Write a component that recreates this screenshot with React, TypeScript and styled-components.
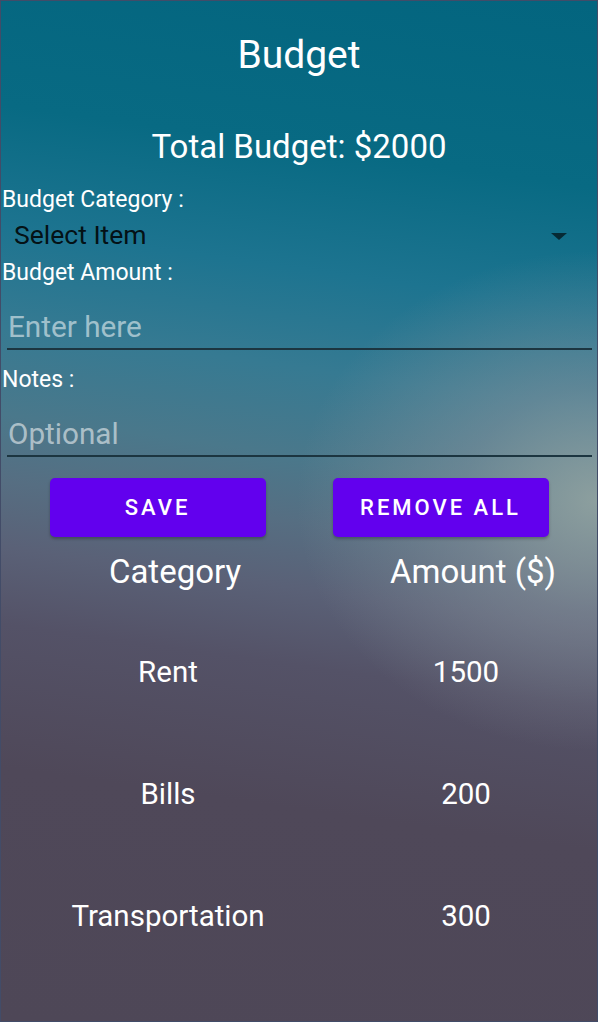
import React from "react";
import styled, { createGlobalStyle } from "styled-components";

const GlobalStyle = createGlobalStyle`
  html, body {
    margin: 0;
    padding: 0;
    background: #4e4757;
  }
  * {
    box-sizing: border-box;
  }
`;

interface Entry {
  category: string;
  amount: number;
}

const entries: Entry[] = [
  { category: "Rent", amount: 1500 },
  { category: "Bills", amount: 200 },
  { category: "Transportation", amount: 300 },
];

const App = () => {
  const total = entries.reduce((sum, e) => sum + e.amount, 0);

  return (
    <>
      <GlobalStyle />
      <Screen>
        <Title>Budget</Title>
        <Total>Total Budget: ${total}</Total>

        <Label>Budget Category :</Label>
        <Spinner>
          <SpinnerText>Select Item</SpinnerText>
          <Arrow />
        </Spinner>

        <Label>Budget Amount :</Label>
        <Field placeholder="Enter here" />

        <Label $gap={17}>Notes :</Label>
        <Field placeholder="Optional" />

        <Actions>
          <Button>Save</Button>
          <Button>Remove All</Button>
        </Actions>

        <Table>
          <HeadCell>Category</HeadCell>
          <HeadCell>Amount ($)</HeadCell>
          {entries.map((e) => (
            <React.Fragment key={e.category}>
              <Cell>{e.category}</Cell>
              <Cell>{e.amount}</Cell>
            </React.Fragment>
          ))}
        </Table>
      </Screen>
    </>
  );
};

export default App;

const Screen = styled.div`
  width: 598px;
  height: 1022px;
  overflow: hidden;
  border: 1px solid #424c68;
  font-family: Roboto, "Noto Sans", sans-serif;
  color: #ffffff;
  display: flex;
  flex-direction: column;
  background: radial-gradient(
      ellipse 300px 250px at 100% 49%,
      rgba(152, 166, 162, 0.85) 0%,
      rgba(140, 148, 156, 0.5) 45%,
      rgba(130, 135, 150, 0) 100%
    ),
    linear-gradient(
      188deg,
      #03657f 0%,
      #086a83 17%,
      #1d7490 28%,
      #367a92 37%,
      #4a788b 45%,
      #566e82 51%,
      #5a6177 57%,
      #545267 64%,
      #4f4859 77%,
      #4e4757 100%
    );
`;

const Title = styled.h1`
  margin: 31px 0 0;
  font-size: 39px;
  line-height: 46px;
  font-weight: 400;
  text-align: center;
`;

const Total = styled.h2`
  margin: 49px 0 0;
  font-size: 33px;
  line-height: 40px;
  font-weight: 400;
  text-align: center;
`;

const Label = styled.div<{ $gap?: number }>`
  margin-top: ${({ $gap }) => $gap ?? 20}px;
  padding-left: 1px;
  font-size: 23px;
  line-height: 26px;
`;

const Spinner = styled.div`
  margin-top: 5px;
  height: 34px;
  display: flex;
  align-items: center;
  justify-content: space-between;
  padding: 0 30px 0 13px;
  margin-bottom: -12px;
`;

const SpinnerText = styled.span`
  font-size: 26.5px;
  line-height: 34px;
  color: rgba(0, 0, 0, 0.87);
`;

const Arrow = styled.span`
  width: 0;
  height: 0;
  margin-top: 2px;
  border-left: 8px solid transparent;
  border-right: 8px solid transparent;
  border-top: 7px solid rgba(0, 0, 0, 0.62);
`;

const Field = styled.input`
  margin: 22px 5px 0 6px;
  height: 42px;
  padding: 0 0 4px 1px;
  background: transparent;
  border: none;
  border-bottom: 2px solid #1c3540;
  outline: none;
  font-family: Roboto, "Noto Sans", sans-serif;
  font-size: 29.7px;
  line-height: 36px;
  color: #ffffff;

  &::placeholder {
    color: rgba(255, 255, 255, 0.55);
  }
`;

const Actions = styled.div`
  margin-top: 21px;
  display: flex;
  justify-content: center;
  gap: 67px;
`;

const Button = styled.button`
  width: 216px;
  height: 59px;
  border: none;
  border-radius: 5px;
  background: #6200ee;
  color: #ffffff;
  font-family: Roboto, "Noto Sans", sans-serif;
  font-size: 22px;
  font-weight: 500;
  letter-spacing: 3px;
  text-transform: uppercase;
  box-shadow: 0 2px 3px rgba(0, 0, 0, 0.25);
  cursor: pointer;
`;

const Table = styled.div`
  margin-top: 15px;
  display: grid;
  grid-template-columns: 334px 1fr;
  grid-template-rows: 59px;
  grid-auto-rows: 122px;
`;

const HeadCell = styled.div`
  padding-left: 14px;
  font-size: 33px;
  line-height: 40px;
  text-align: center;
`;

const Cell = styled.div`
  display: flex;
  align-items: center;
  justify-content: center;
  font-size: 29.5px;
`;
